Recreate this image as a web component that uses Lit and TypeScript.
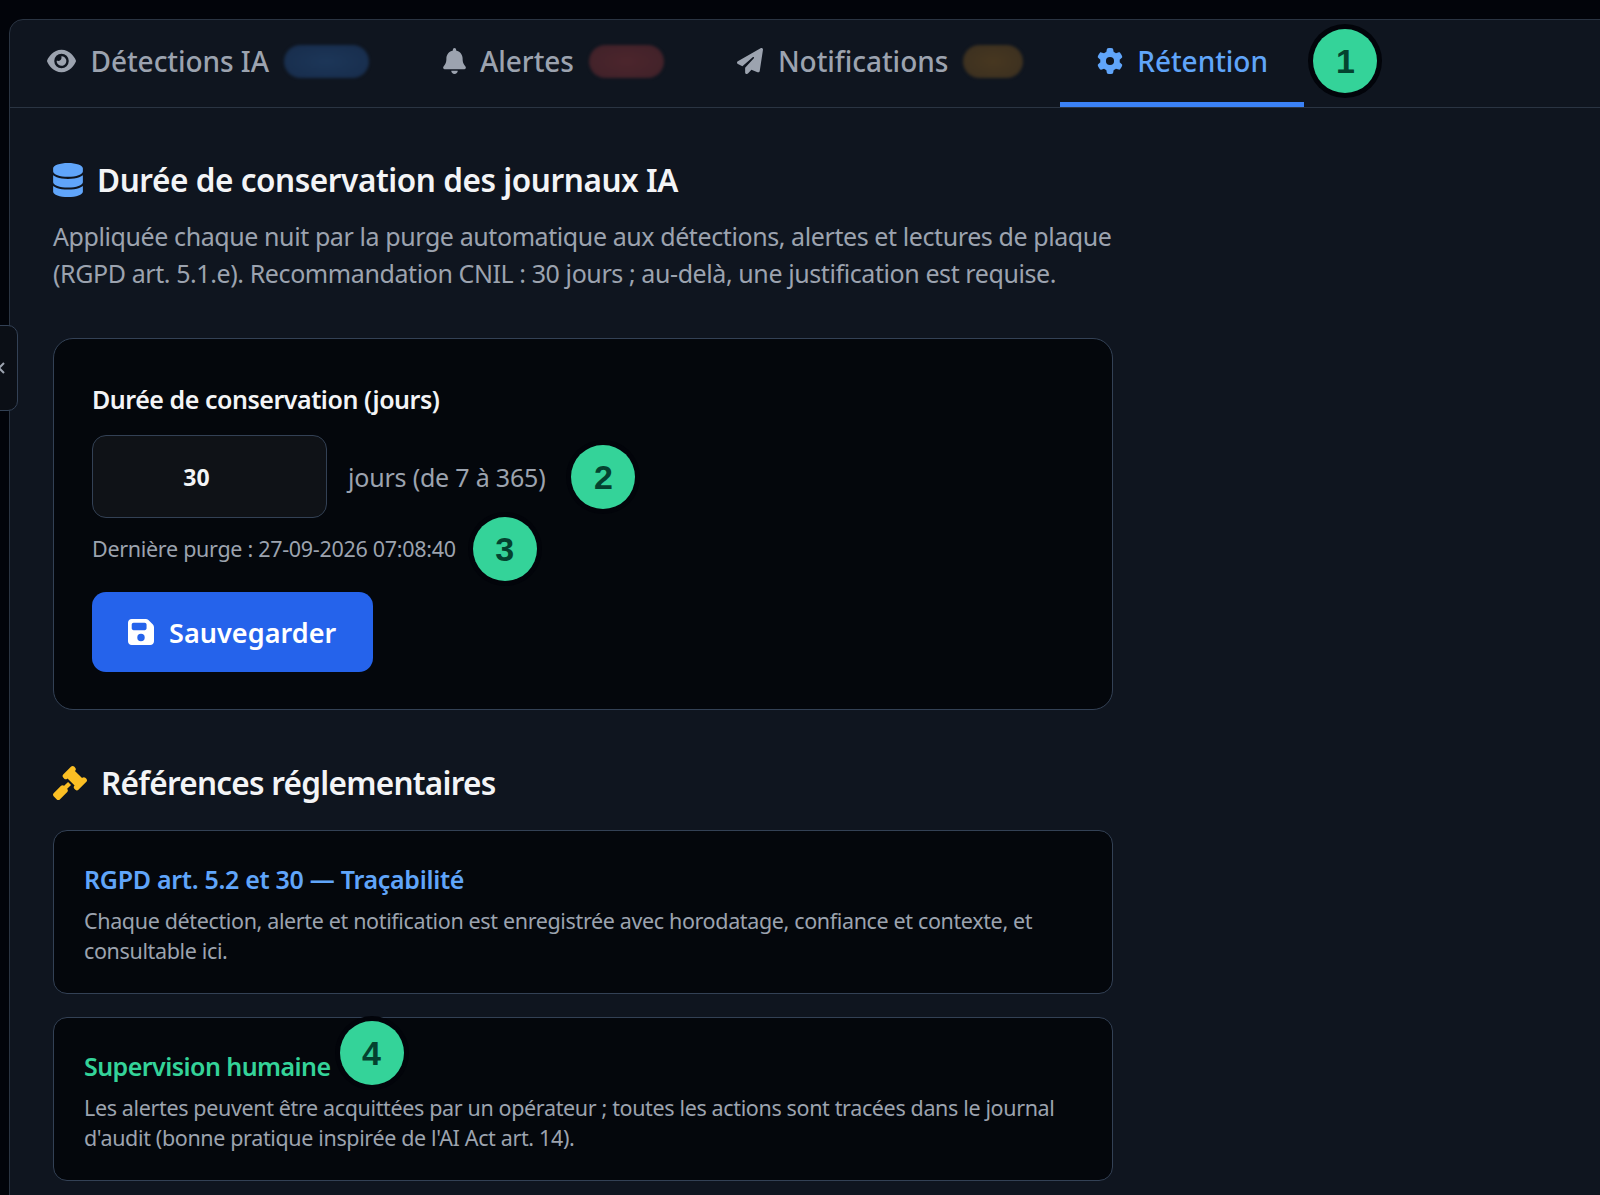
import { LitElement, html, css, svg } from "lit";
import { customElement } from "lit/decorators.js";

const P: Record<string, [string, string]> = {
  eye: ["0 0 576 512", "M288 32c-80.8 0-145.5 36.8-192.6 80.6C48.6 156 17.3 208 2.5 243.7c-3.3 7.9-3.3 16.7 0 24.6C17.3 304 48.6 356 95.4 399.4C142.5 443.2 207.2 480 288 480s145.5-36.8 192.6-80.6c46.8-43.5 78.1-95.4 93-131.1c3.3-7.9 3.3-16.7 0-24.6c-14.9-35.7-46.2-87.7-93-131.1C433.5 68.8 368.8 32 288 32zM144 256a144 144 0 1 1 288 0 144 144 0 1 1 -288 0zm144-64c0 35.3-28.7 64-64 64c-7.1 0-13.9-1.2-20.3-3.3c-5.5-1.8-11.9 1.6-11.7 7.4c.3 6.9 1.3 13.8 3.2 20.7c13.7 51.2 66.4 81.6 117.6 67.9s81.6-66.4 67.9-117.6c-11.1-41.5-47.8-69.4-88.6-71.1c-5.8-.2-9.2 6.1-7.4 11.7c2.1 6.4 3.3 13.2 3.3 20.3z"],
  bell: ["0 0 448 512", "M224 0c-17.7 0-32 14.3-32 32V51.2C119 66 64 130.6 64 208v18.8c0 47-17.3 92.4-48.5 127.6l-7.4 8.3c-8.4 9.4-10.4 22.9-5.3 34.4S19.4 416 32 416H416c12.6 0 24-7.4 29.2-18.9s3.1-25-5.3-34.4l-7.4-8.3C401.3 319.2 384 273.9 384 226.8V208c0-77.4-55-142-128-156.8V32c0-17.7-14.3-32-32-32zm45.3 493.3c12-12 18.7-28.3 18.7-45.3H224 160c0 17 6.7 33.3 18.7 45.3s28.3 18.7 45.3 18.7s33.3-6.7 45.3-18.7z"],
  plane: ["0 0 512 512", "M498.1 5.6c10.1 7 15.4 19.1 13.5 31.2l-64 416c-1.5 9.7-7.4 18.2-16 23s-18.9 5.4-28 1.6L284 427.7l-68.5 74.1c-8.9 9.7-22.9 12.9-35.2 8.1S160 493.2 160 480V396.4c0-4 1.5-7.8 4.2-10.7L331.8 202.8c5.8-6.3 5.6-16-.4-22s-15.7-6.4-22-.7L106 360.8 17.7 316.6C7.1 311.3 .3 300.7 0 288.9s5.9-22.8 16.1-28.7l448-256c10.7-6.1 23.9-5.5 34 1.4z"],
  gear: ["0 0 512 512", "M495.9 166.6c3.2 8.7 .5 18.4-6.4 24.6l-43.3 39.4c1.1 8.3 1.7 16.8 1.7 25.4s-.6 17.1-1.7 25.4l43.3 39.4c6.9 6.2 9.6 15.9 6.4 24.6c-4.4 11.9-9.7 23.3-15.8 34.3l-4.7 8.1c-6.6 11-14 21.4-22.1 31.2c-5.9 7.2-15.7 9.6-24.5 6.8l-55.7-17.7c-13.4 10.3-28.2 18.9-44 25.4l-12.5 57.1c-2 9.1-9 16.3-18.2 17.8c-13.8 2.3-28 3.5-42.5 3.5s-28.7-1.2-42.5-3.5c-9.2-1.5-16.2-8.7-18.2-17.8l-12.5-57.1c-15.8-6.5-30.6-15.1-44-25.4L83.1 425.9c-8.8 2.8-18.6 .3-24.5-6.8c-8.1-9.8-15.5-20.2-22.1-31.2l-4.7-8.1c-6.1-11-11.4-22.4-15.8-34.3c-3.2-8.7-.5-18.4 6.4-24.6l43.3-39.4C64.6 273.1 64 264.6 64 256s.6-17.1 1.7-25.4L22.4 191.2c-6.9-6.2-9.6-15.9-6.4-24.6c4.4-11.9 9.7-23.3 15.8-34.3l4.7-8.1c6.6-11 14-21.4 22.1-31.2c5.9-7.2 15.7-9.6 24.5-6.8l55.7 17.7c13.4-10.3 28.2-18.9 44-25.4l12.5-57.1c2-9.1 9-16.3 18.2-17.8C227.3 1.2 241.5 0 256 0s28.7 1.2 42.5 3.5c9.2 1.5 16.2 8.7 18.2 17.8l12.5 57.1c15.8 6.5 30.6 15.1 44 25.4l55.7-17.7c8.8-2.8 18.6-.3 24.5 6.8c8.1 9.8 15.5 20.2 22.1 31.2l4.7 8.1c6.1 11 11.4 22.4 15.8 34.3zM256 336a80 80 0 1 0 0-160 80 80 0 1 0 0 160z"],
  db: ["0 0 448 512", "M448 80v48c0 44.2-100.3 80-224 80S0 172.2 0 128V80C0 35.8 100.3 0 224 0S448 35.8 448 80zM393.2 214.7c20.8-7.4 39.9-16.9 54.8-28.6V288c0 44.2-100.3 80-224 80S0 332.2 0 288V186.1c14.9 11.8 34 21.2 54.8 28.6C99.7 230.7 159.5 240 224 240s124.3-9.3 169.2-25.3zM0 346.1c14.9 11.8 34 21.2 54.8 28.6C99.7 390.7 159.5 400 224 400s124.3-9.3 169.2-25.3c20.8-7.4 39.9-16.9 54.8-28.6V432c0 44.2-100.3 80-224 80S0 476.2 0 432V346.1z"],
  save: ["0 0 448 512", "M64 32C28.7 32 0 60.7 0 96V416c0 35.3 28.7 64 64 64H384c35.3 0 64-28.7 64-64V173.3c0-17-6.7-33.3-18.7-45.3L352 50.7C340 38.7 323.7 32 306.7 32H64zm0 96c0-17.7 14.3-32 32-32H288c17.7 0 32 14.3 32 32v64c0 17.7-14.3 32-32 32H96c-17.7 0-32-14.3-32-32V128zM224 288a64 64 0 1 1 0 128 64 64 0 1 1 0-128z"],
  gavel: ["0 0 512 512", "M318.6 9.4c-12.5-12.5-32.8-12.5-45.3 0l-120 120c-12.5 12.5-12.5 32.8 0 45.3l16 16c12.5 12.5 32.8 12.5 45.3 0l4-4L325.4 293.4l-4 4c-12.5 12.5-12.5 32.8 0 45.3l16 16c12.5 12.5 32.8 12.5 45.3 0l120-120c12.5-12.5 12.5-32.8 0-45.3l-16-16c-12.5-12.5-32.8-12.5-45.3 0l-4 4L330.6 74.6l4-4c12.5-12.5 12.5-32.8 0-45.3l-16-16zm-152 288c-12.5-12.5-32.8-12.5-45.3 0l-112 112c-12.5 12.5-12.5 32.8 0 45.3l48 48c12.5 12.5 32.8 12.5 45.3 0l112-112c12.5-12.5 12.5-32.8 0-45.3l-1.4-1.4L272 285.3 226.7 240 168 298.7l-1.4-1.4z"],
};

const icon = (n: string, cls: string) => html`<svg class=${cls} viewBox=${P[n][0]} fill="currentColor">${svg`<path d=${P[n][1]}></path>`}</svg>`;

@customElement("app-root")
export class AppRoot extends LitElement {
  static styles = css`
    :host {
      display: block;
      height: 1195px;
      overflow: hidden;
      background: #02040a;
      font-family: "Noto Sans", "Open Sans", sans-serif;
      position: relative;
    }
    .panel {
      margin: 19px -12px 0 9px;
      height: 1300px;
      background: #0f151f;
      border: 1px solid #2a3442;
      border-radius: 14px 0 0 0;
    }
    .tabs {
      display: flex;
      align-items: stretch;
      height: 87px;
      border-bottom: 1px solid #2a3442;
    }
    .tab {
      position: relative;
      display: flex;
      align-items: center;
      padding: 0 36.5px 0 37px;
      font-size: 28px;
      font-weight: 500;
      letter-spacing: -0.05px;
      color: #9ca3af;
      border-bottom: 5px solid transparent;
      box-sizing: border-box;
    }
    .tab.active { color: #60a5fa; border-bottom-color: #3b82f6; }
    .ti { height: 26px; width: auto; margin-right: 14.5px; flex: none; }
    .ti.eye { width: 29px; }
    .ti.bell { width: 23px; }
    .ti.plane, .ti.gear { width: 26px; }
    .pill {
      height: 33px;
      border-radius: 17px;
      margin-left: 15px;
      filter: blur(1.5px);
    }
    .pill.b { width: 85px; background: radial-gradient(ellipse, #1c3658, #172c4b); }
    .pill.r { width: 75px; background: radial-gradient(ellipse, #4c252c, #3f2129); }
    .pill.y { width: 60px; background: radial-gradient(ellipse, #473720, #3a2f20); }
    .anchor { position: relative; display: inline-block; }
    .num {
      position: absolute;
      left: 100%;
      top: 50%;
      transform: translateY(-50%);
      width: 64px;
      height: 64px;
      border-radius: 50%;
      background: #34d399;
      color: #04422f;
      font: 700 34px/64px "Liberation Sans", Arial, sans-serif;
      letter-spacing: 0;
      text-align: center;
      box-shadow: 0 0 0 5px #02040a;
    }
    .n1 { margin-left: 9px; }
    .n2 { margin-left: 26px; }
    .n3 { margin-left: 17px; }
    .n4 { margin-left: 9px; margin-top: -13px; }
    .content { padding: 50px 0 0 43px; width: 1060px; }
    h2 {
      margin: 0;
      display: flex;
      align-items: center;
      font-size: 31.5px;
      line-height: 44px;
      letter-spacing: -0.43px;
      font-weight: 600;
      color: #f3f4f6;
    }
    .hi { height: 34px; width: 30px; margin-right: 14px; color: #60a5fa; flex: none; }
    .gv { height: 34px; width: 34px; margin-right: 14px; color: #fbbf24; flex: none; }
    .intro {
      margin: 16px -12px 46px 0;
      font-size: 25px;
      line-height: 37px;
      letter-spacing: -0.41px;
      color: #9ca3af;
    }
    .card {
      background: #04070c;
      border: 1px solid #334155;
      border-radius: 20px;
      padding: 43px 38px 37px;
    }
    label {
      display: block;
      font-size: 25px;
      line-height: 34px;
      letter-spacing: -0.47px;
      font-weight: 600;
      color: #f3f4f6;
      margin-bottom: 19px;
    }
    .row { display: flex; align-items: center; gap: 21px; margin-bottom: 16px; }
    .input {
      width: 235px;
      height: 83px;
      box-sizing: border-box;
      background: #0f1217;
      border: 1px solid #334155;
      border-radius: 14px;
      display: flex;
      align-items: center;
      justify-content: center;
      padding-right: 26px;
      font-size: 23px;
      font-weight: 700;
      color: #f3f4f6;
    }
    .unit { font-size: 25px; letter-spacing: -0.2px; color: #9ca3af; }
    .purge { font-size: 21.5px; line-height: 30px; letter-spacing: -0.3px; color: #9ca3af; margin-bottom: 28px; }
    .save {
      display: inline-flex;
      align-items: center;
      height: 80px;
      width: 281px;
      box-sizing: border-box;
      padding-left: 36px;
      background: #2563eb;
      border-radius: 14px;
      color: #fff;
      font-size: 27px;
      letter-spacing: 0.05px;
      font-weight: 600;
    }
    .si { height: 30px; width: 26px; margin-right: 15px; }
    h2.refs { margin: 51px 0 25px; letter-spacing: -0.73px; }
    .ref {
      background: #04070c;
      border: 1px solid #334155;
      border-radius: 14px;
      padding: 31px 30px 28px;
      margin-bottom: 23px;
    }
    .rt { font-size: 25px; line-height: 34px; letter-spacing: -0.3px; font-weight: 600; }
    .rt.blue { color: #60a5fa; }
    .rt.green { color: #34d399; letter-spacing: -0.55px; }
    .rb { margin: 10px 0 0; font-size: 21.5px; line-height: 29.5px; letter-spacing: -0.36px; color: #9ca3af; }
    .side {
      position: absolute;
      left: -2px;
      top: 325px;
      width: 20px;
      height: 86px;
      box-sizing: border-box;
      background: #0b0f16;
      border: 1px solid #334155;
      border-radius: 0 10px 10px 0;
      display: flex;
      align-items: center;
      justify-content: flex-start;
      overflow: hidden;
    }
    .side svg { width: 10px; height: 12px; margin-left: -3px; color: #9ca3af; }
  `;

  render() {
    return html`
      <div class="panel">
        <div class="tabs">
          <div class="tab">${icon("eye", "ti eye")}Détections IA<span class="pill b"></span></div>
          <div class="tab">${icon("bell", "ti bell")}Alertes<span class="pill r"></span></div>
          <div class="tab">${icon("plane", "ti plane")}Notifications<span class="pill y"></span></div>
          <div class="tab active">${icon("gear", "ti gear")}Rétention<span class="num n1">1</span></div>
        </div>
        <div class="content">
          <h2>${icon("db", "hi")}Durée de conservation des journaux IA</h2>
          <p class="intro">Appliquée chaque nuit par la purge automatique aux détections, alertes et lectures de plaque (RGPD art. 5.1.e). Recommandation CNIL : 30 jours ; au-delà, une justification est requise.</p>
          <div class="card">
            <label>Durée de conservation (jours)</label>
            <div class="row">
              <div class="input">30</div>
              <span class="unit anchor">jours (de 7 à 365)<span class="num n2">2</span></span>
            </div>
            <div class="purge"><span class="anchor">Dernière purge : 27-09-2026 07:08:40<span class="num n3">3</span></span></div>
            <div class="save">${icon("save", "si")}Sauvegarder</div>
          </div>
          <h2 class="refs">${icon("gavel", "gv")}Références réglementaires</h2>
          <div class="ref">
            <div class="rt blue">RGPD art. 5.2 et 30 — Traçabilité</div>
            <p class="rb">Chaque détection, alerte et notification est enregistrée avec horodatage, confiance et contexte, et consultable ici.</p>
          </div>
          <div class="ref">
            <div class="rt green"><span class="anchor">Supervision humaine<span class="num n4">4</span></span></div>
            <p class="rb">Les alertes peuvent être acquittées par un opérateur ; toutes les actions sont tracées dans le journal d'audit (bonne pratique inspirée de l'AI Act art. 14).</p>
          </div>
        </div>
      </div>
      <div class="side"><svg viewBox="0 0 10 12" fill="none" stroke="currentColor" stroke-width="2"><path d="M8 1 3 6l5 5"></path></svg></div>
    `;
  }
}
